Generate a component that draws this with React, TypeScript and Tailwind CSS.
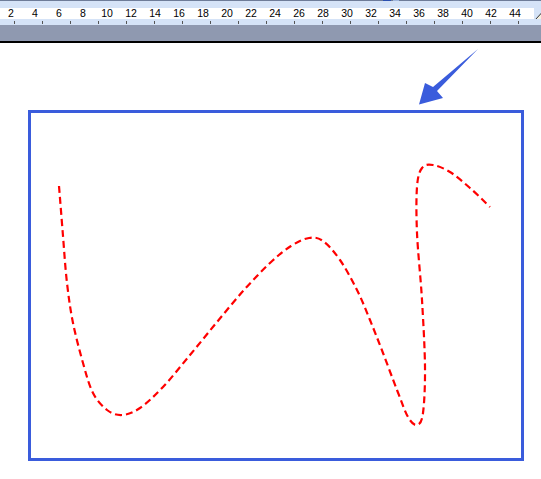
import React from "react";

const PTS: [number, number][] = [
  [59, 186], [63, 236], [67, 283], [73, 323], [83, 363], [93, 393], [107, 410],
  [122, 415], [140, 408], [163, 387], [190, 355], [217, 322], [244, 290],
  [270, 263], [291, 246], [309, 238], [323, 241], [340, 260], [357, 290],
  [370, 320], [383, 353], [397, 390], [408, 417], [417, 425], [423, 413],
  [425, 367], [422, 300], [417, 233], [417, 187], [422, 168], [433, 165],
  [450, 172], [470, 188], [490, 207],
];

// catmull-rom -> cubic bezier
const curvePath = () => {
  let d = `M${PTS[0][0]},${PTS[0][1]}`;
  for (let i = 0; i < PTS.length - 1; i++) {
    const p0 = PTS[i - 1] || PTS[i];
    const p1 = PTS[i];
    const p2 = PTS[i + 1];
    const p3 = PTS[i + 2] || p2;
    const c1x = p1[0] + (p2[0] - p0[0]) / 6;
    const c1y = p1[1] + (p2[1] - p0[1]) / 6;
    const c2x = p2[0] - (p3[0] - p1[0]) / 6;
    const c2y = p2[1] - (p3[1] - p1[1]) / 6;
    d += ` C${c1x.toFixed(1)},${c1y.toFixed(1)} ${c2x.toFixed(1)},${c2y.toFixed(1)} ${p2[0]},${p2[1]}`;
  }
  return d;
};

const labels = Array.from({ length: 22 }, (_, i) => (i + 1) * 2);
const ticks = Array.from({ length: 19 }, (_, i) => i);

const Ruler = () => (
  <div className="w-full">
    <div className="h-px bg-[#6e7c98] relative">
      <div className="absolute left-[383px] top-0 h-px w-[8px] bg-[#2a4fb0]" />
      <div className="absolute left-[393px] top-0 h-px w-[6px] bg-[#9fb6dc]" />
    </div>
    <div className="h-[7px] bg-[#d5e3f7]" />
    <div className="h-[11px] bg-[#d5e3f7] flex relative">
      <div className="w-[535px] bg-white flex -ml-px overflow-hidden">
        {labels.map((n) => (
          <div
            key={n}
            className="w-6 shrink-0 text-center text-[10.5px] leading-[11px] text-black"
            style={{ fontFamily: '"Liberation Sans", Arial, sans-serif' }}
          >
            {n}
          </div>
        ))}
      </div>
      <svg className="absolute left-[535px] top-[2px]" width="7" height="10" viewBox="0 0 7 10">
        <polygon points="0.5,9.5 6.5,3 7,9.5" fill="#f4f0e0" stroke="#333" strokeWidth="1" />
      </svg>
    </div>
    <div className="h-[6px] bg-[#d5e3f7] relative">
      {ticks.map((i) => (
        <div
          key={i}
          className="absolute top-[2px] h-[3px] w-px bg-[#555]"
          style={{ left: 14 + i * 28 }}
        />
      ))}
    </div>
    <div className="h-[16px] bg-[#8f99b0]" />
    <div className="h-[2px] bg-black" />
  </div>
);

export default function App() {
  return (
    <div className="w-[541px] h-[479px] bg-white overflow-hidden">
      <Ruler />
      <div className="relative h-[436px] pt-[67px] pl-[28px]">
        <div className="w-[496px] h-[351px] border-[3px] border-[#3a5cdc]" />
        <svg
          className="absolute inset-0"
          width="541"
          height="436"
          viewBox="0 43 541 436"
        >
          <path
            d={curvePath()}
            fill="none"
            stroke="#ff0000"
            strokeWidth="2.2"
            strokeDasharray="7 4"
          />
          <polygon
            points="478,49 437,91 443,98 419,104.5 425,83 433,87"
            fill="#3a5cdc"
          />
        </svg>
      </div>
    </div>
  );
}
